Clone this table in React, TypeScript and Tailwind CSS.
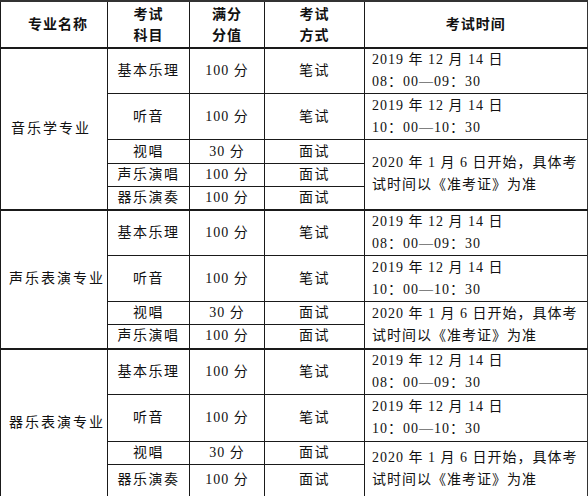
import React from "react";

type Row = {
  h: number;
  major?: { name: string; span: number; pl: string };
  subject: string;
  score: string;
  mode: string;
  time?: { lines: string[]; span: number };
};

const DATE_AM = ["2019 年 12 月 14 日", "08：00—09：30"];
const DATE_PM = ["2019 年 12 月 14 日", "10：00—10：30"];
const FACE = ["2020 年 1 月 6 日开始，具体考", "试时间以《准考证》为准"];

const rows: Row[] = [
  { h: 45, major: { name: "音乐学专业", span: 5, pl: "pl-[10px]" }, subject: "基本乐理", score: "100 分", mode: "笔试", time: { lines: DATE_AM, span: 1 } },
  { h: 46, subject: "听音", score: "100 分", mode: "笔试", time: { lines: DATE_PM, span: 1 } },
  { h: 24, subject: "视唱", score: "30 分", mode: "面试", time: { lines: FACE, span: 3 } },
  { h: 23, subject: "声乐演唱", score: "100 分", mode: "面试" },
  { h: 23, subject: "器乐演奏", score: "100 分", mode: "面试" },

  { h: 46, major: { name: "声乐表演专业", span: 4, pl: "pl-2" }, subject: "基本乐理", score: "100 分", mode: "笔试", time: { lines: DATE_AM, span: 1 } },
  { h: 46, subject: "听音", score: "100 分", mode: "笔试", time: { lines: DATE_PM, span: 1 } },
  { h: 23, subject: "视唱", score: "30 分", mode: "面试", time: { lines: FACE, span: 2 } },
  { h: 24, subject: "声乐演唱", score: "100 分", mode: "面试" },

  { h: 45, major: { name: "器乐表演专业", span: 4, pl: "pl-2" }, subject: "基本乐理", score: "100 分", mode: "笔试", time: { lines: DATE_AM, span: 1 } },
  { h: 47, subject: "听音", score: "100 分", mode: "笔试", time: { lines: DATE_PM, span: 1 } },
  { h: 23, subject: "视唱", score: "30 分", mode: "面试", time: { lines: FACE, span: 2 } },
  { h: 32, subject: "器乐演奏", score: "100 分", mode: "面试" },
];

const cell = "border border-[#1a1a1a] p-0 align-middle";

export default function App() {
  return (
    <div className="w-[588px] h-[496px] bg-white text-[#111] text-[14px] font-['Liberation_Serif','Noto_Sans_CJK_SC',serif]">
      <table className="w-[587px] table-fixed border-collapse border-t-2 border-r-2 border-[#333]">
        <colgroup>
          <col className="w-[107px]" />
          <col className="w-[82px]" />
          <col className="w-[75px]" />
          <col className="w-[100px]" />
          <col className="w-[223px]" />
        </colgroup>
        <thead>
          <tr className="h-[47px] font-bold leading-[21px] tracking-[1px]">
            <th className={`${cell} text-center pl-2`}>专业名称</th>
            <th className={`${cell} text-center`}>考试<br />科目</th>
            <th className={`${cell} text-center`}>满分<br />分值</th>
            <th className={`${cell} text-center`}>考试<br />方式</th>
            <th className={`${cell} text-center`}>考试时间</th>
          </tr>
        </thead>
        <tbody>
          {rows.map((r, i) => (
            <tr key={i} style={{ height: r.h }} className="leading-[20px]">
              {r.major && (
                <td rowSpan={r.major.span} className={`${cell} ${r.major.pl} text-left tracking-[2px] border-t-2`}>
                  {r.major.name}
                </td>
              )}
              <td className={`${cell} text-center tracking-[1.5px] ${r.major ? "border-t-2" : ""}`}>{r.subject}</td>
              <td className={`${cell} text-center tracking-[1px] ${r.major ? "border-t-2" : ""}`}>{r.score}</td>
              <td className={`${cell} text-center tracking-[1.5px] ${r.major ? "border-t-2" : ""}`}>{r.mode}</td>
              {r.time && (
                <td rowSpan={r.time.span} className={`${cell} pl-[7px] text-left tracking-[1px] leading-[22px] ${r.major ? "border-t-2" : ""}`}>
                  {r.time.lines.map((l, j) => (
                    <div key={j} className="whitespace-nowrap">{l}</div>
                  ))}
                </td>
              )}
            </tr>
          ))}
        </tbody>
      </table>
    </div>
  );
}
